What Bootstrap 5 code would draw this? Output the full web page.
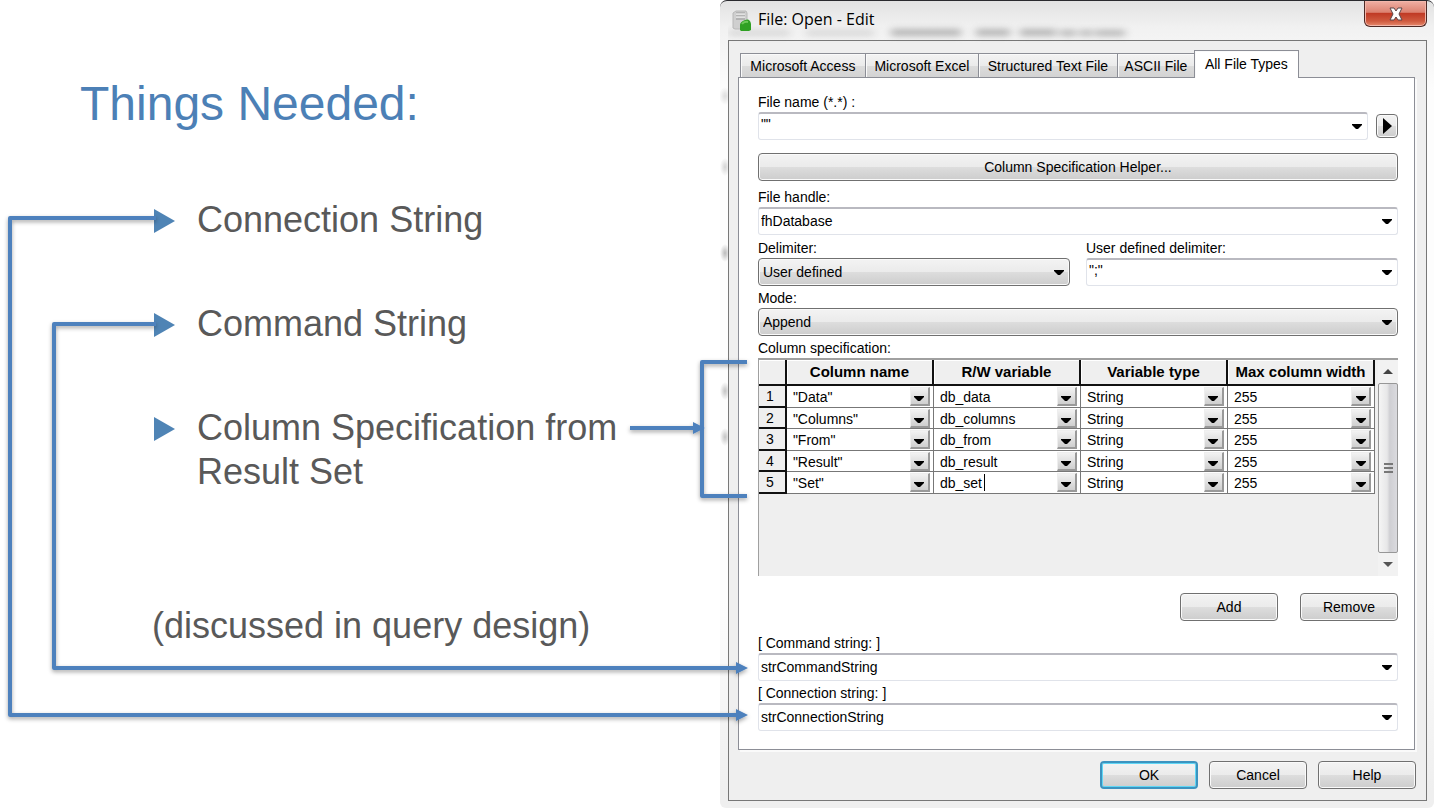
<!DOCTYPE html>
<html lang="en">
<head>
<meta charset="utf-8">
<meta name="viewport" content="width=device-width, initial-scale=1">
<title>Things Needed</title>
<link rel="stylesheet" href="https://cdn.jsdelivr.net/npm/bootstrap@5.3.0/dist/css/bootstrap.min.css">
<style>
  body { background: #fff; color: #000; font-family: "Liberation Sans", Arial, sans-serif; font-size: 14px; line-height: 20px; }
  .slide { min-height: 100vh; }
  .connectors { left: 0; top: 0; width: 100%; height: 808px; pointer-events: none; z-index: 2; }

  .notes { padding: 75px 0 0 80px; color: #595959; font-size: 36px; line-height: 44px; }
  .notes h1 { color: #4c80b6; font-size: 48px; line-height: 58px; margin: 0 0 65px; font-weight: 400; }
  .needs { margin: 0 0 110px 74px; display: grid; row-gap: 60px; }
  .needs li { display: flex; gap: 22px; }
  .needs svg { flex: none; margin-top: 11px; }
  .aside-note { margin: 0 0 0 72px; }

  .dialog-win { flex: 0 0 49.8%; padding: 0 7px 7px 8px; border-radius: 7px 7px 6px 6px;
    border-top: 1px solid #2a2a2e;
    background:
      radial-gradient(ellipse 6px 9px at 5px 95px, #ddd, transparent),
      radial-gradient(ellipse 5px 9px at 5px 166px, #d4d4d4, transparent),
      radial-gradient(ellipse 5px 9px at 5px 252px, #bbb, transparent),
      radial-gradient(ellipse 5px 9px at 5px 390px, #c4c4c4, transparent),
      radial-gradient(ellipse 5px 9px at 5px 436px, #c4c4c4, transparent),
      linear-gradient(#e2e2e2 0, #f1f1f1 26px, #f4f4f4 40px, #fdfdfd 90px, #fdfdfd 600px, #efefef 790px); }
  .titlebar { height: 39px; }
  .titlebar .ghost { left: 0; top: 20px; width: 410px; height: 22px; }
  .titlebar h2 { font: 16px/20px "Open Sans", "Noto Sans", sans-serif; margin: 8px 0 0 7px; }
  .titlebar .app-icon { margin: 9px 0 0 4px; flex: none; }
  .close-btn { width: 63px; height: 26px; padding: 0; border: 1px solid #4e2925; border-top: 0; border-radius: 0 0 6px 6px;
    background: linear-gradient(#efb0a4 0, #dc8271 45%, #c03a25 50%, #cf5a3f 80%, #e68a6d); box-shadow: inset 0 0 0 1px #f2b7ab; display: flex; align-items: center; justify-content: center; }

  .client { border: 1px solid #777; background: #efefef; padding: 9px 10px 11px 9px; }
  .file-tabs { display: grid; grid-template-columns: 126px 113px 139px 77px 104px; align-items: end; padding-left: 2px; position: relative; z-index: 1; margin-bottom: -1px; }
  .file-tabs button { height: 25px; padding: 0; border: 1px solid #8c8e96; border-left-width: 0; background: linear-gradient(#f3f3f3, #ebebeb 50%, #dcdcdc 51%, #d3d3d3); box-shadow: inset 1px 1px #fafafa; font-size: 14px; line-height: 20px; color: #000; white-space: nowrap; }
  .file-tabs button:first-child { border-left-width: 1px; }
  .file-tabs .current { height: 28px; background: #fff; border-left-width: 1px; border-bottom: 0; padding-bottom: 2px; margin-left: -1px; }
  .sheet { border: 1px solid #8c8e96; box-shadow: 2px 2px #fafafa; background: #fff; padding: 12px 16px 18px 19px; margin-right: 1px; }
  .sheet label, .cap { display: block; height: 22px; line-height: 24px; white-space: nowrap; }

  .combo { display: flex; height: 28px; border: 1px solid #e0e3ea; border-top: 2px solid #b9b9c0; border-radius: 3px; background: #fff; }
  .combo input { flex: 1; min-width: 0; border: 0; padding: 0 2px 2px; background: transparent; outline: 0; }
  .combo input, .push, .pick { font-size: 14px; line-height: 20px; color: #000; }
  .combo button, .cell button { border: 0; padding: 0; background: transparent; }
  .combo button { width: 20px; line-height: 0; }
  .combo.quoted input { padding-bottom: 6px; }
  .push, .pick { height: 28px; padding: 0; border: 1px solid #707070; border-radius: 4px; box-shadow: inset 0 0 0 1px #fafafa; background: linear-gradient(#f3f3f3, #ebebeb 50%, #dddddd 51%, #cdcdcd); }
  .push { width: 98px; }
  .push.wide { width: 100%; margin: 13px 0 4px; }
  .push.primary { border: 2px solid #3c93bf; box-shadow: inset 0 0 0 1px #5fd6f5; }
  .push.play { width: 22px; height: 24px; display: flex; align-items: center; justify-content: center; }
  .pick { width: 100%; appearance: none; padding: 0 4px; }
  .pick-wrap svg { position: absolute; right: 6px; top: 12px; pointer-events: none; }
  .delims { margin-top: 1px; }
  .edit-row { gap: 22px; margin: 17px 0 10px; }
  .end-row { gap: 11px; margin-top: 11px; }

  .grid-box { height: 218px; border-top: 2px solid #a0a0a0; border-left: 1px solid #a0a0a0; background: #efefef; }
  .spec { width: 100%; table-layout: fixed; border-collapse: separate; border-spacing: 0; font-size: 14px; }
  .spec th, .spec td { padding: 0; overflow: hidden; white-space: nowrap; }
  .spec thead th { height: 26px; font-size: 15px; line-height: 20px; text-align: center; font-weight: 700; background: #efefef; border-right: 2px solid #111; border-bottom: 2px solid #111; box-shadow: inset 1px 1px #fff; }
  .spec tbody tr { height: 22px; }
  .spec tbody tr:nth-child(even) { height: 21px; }
  .spec tbody th { font-weight: 400; text-align: center; padding-right: 4px; border-right: 2px solid #111; border-bottom: 2px solid #111; background: #efefef; line-height: 18px; }
  .spec td { border-right: 1px solid #777; border-bottom: 1px solid #777; background: #fff; }
  .spec .num { width: 28px; }
  .cell { display: flex; height: 20px; padding-right: 3px; }
  .cell input { flex: 1; min-width: 0; width: 0; height: 20px; border: 0; padding: 0 6px; outline: 0; line-height: 18px; color: #000; background: transparent; }
  .cell button { width: 20px; height: 19px; border: 1px solid #eee; border-right: 2px solid #999; border-bottom: 2px solid #999; background: linear-gradient(#f2f2f2, #cfcfcf); line-height: 0; padding-top: 6px; }
  .spec tr:nth-child(even) .cell { height: 19px; }
  .caret { width: 1px; height: 17px; left: 50px; top: 1px; background: #000; }

  .vscroll { width: 22px; margin-left: 3px; background: #f2f2f2; display: flex; flex-direction: column; align-items: center; }
  .vscroll button { height: 23px; width: 20px; border: 0; padding: 0; background: transparent; line-height: 0; }
  .vscroll .thumb { flex: 1; width: 20px; border: 1px solid #979797; border-radius: 2px; background: linear-gradient(90deg, #f5f5f5, #e7e7e8 45%, #cfcfd3 60%, #dadade); display: flex; align-items: center; justify-content: center; }
</style>
</head>
<body>
<svg width="0" height="0" class="position-absolute" aria-hidden="true">
  <symbol id="down" viewBox="0 0 10 5"><path d="M0 0h10v1L6 5H4L0 1z"/></symbol>
  <symbol id="bullet" viewBox="0 0 21 24"><path d="M0 0L21 12L0 24z" fill="#4f84b5"/></symbol>
</svg>

<main class="slide d-flex align-items-start position-relative">
  <section class="notes flex-fill">
    <h1>Things Needed:</h1>
    <ul class="needs list-unstyled">
      <li><svg width="21" height="24"><use href="#bullet"/></svg><span>Connection String</span></li>
      <li><svg width="21" height="24"><use href="#bullet"/></svg><span>Command String</span></li>
      <li><svg width="21" height="24"><use href="#bullet"/></svg><span>Column Specification from<br>Result Set</span></li>
    </ul>
    <p class="aside-note">(discussed in query design)</p>
  </section>

  <section class="dialog-win">
    <header class="titlebar d-flex position-relative">
      <svg class="ghost position-absolute" aria-hidden="true">
        <defs><filter id="haze" x="-10%" y="-100%" width="120%" height="300%"><feGaussianBlur stdDeviation="4 3"/></filter></defs>
        <g filter="url(#haze)" fill="#777" opacity=".5">
          <path opacity=".45" d="M0 9h62v6H0zM78 9h68v6H78z"/>
          <path d="M163 8h70v7h-70zM248 8h34v7h-34zM292 8h36v7h-36zM332 9h16v6h-16zM352 9h12v6h-12zM367 9h30v6h-30z"/>
        </g>
      </svg>
      <svg class="app-icon position-relative" width="19" height="22" viewBox="0 0 19 22" aria-hidden="true">
        <path d="M1 3l3-2h10l1 2v16H3l-2-1z" fill="#cfcfcf" stroke="#b8b8b8"/>
        <path d="M4 3h9M4 6h9M4 9h9" stroke="#969696"/>
        <path d="M4 4h9M4 7h9" stroke="#f4f4f4"/>
        <path d="M8 20v-5q0-3 5-5t6 4v6l-2 1H9z" fill="#2fa023"/>
        <path d="M10 14q2-3 6-2" stroke="#6cc957" stroke-width="2" fill="none"/>
      </svg>
      <h2 class="position-relative flex-fill">File: Open - Edit</h2>
      <button class="close-btn" type="button" aria-label="Close">
        <svg width="16" height="14" viewBox="0 0 16 14"><path d="M2 1h4l2 3 2-3h4l-3 6 3 6h-4L8 10l-2 3H2l3-6z" fill="#fff" stroke="#59474a"/></svg>
      </button>
    </header>

    <div class="client">
      <div class="file-tabs" role="tablist">
        <button type="button" role="tab">Microsoft Access</button>
        <button type="button" role="tab">Microsoft Excel</button>
        <button type="button" role="tab">Structured Text File</button>
        <button type="button" role="tab">ASCII File</button>
        <button type="button" role="tab" class="current" aria-selected="true">All File Types</button>
      </div>

      <form class="sheet">
        <label for="fname">File name (*.*) :</label>
        <div class="d-flex align-items-center">
          <div class="combo quoted flex-fill"><input id="fname" type="text" value='""'><button type="button" aria-label="Show file names"><svg width="10" height="5"><use href="#down"/></svg></button></div>
          <button class="push play ms-2" type="button" aria-label="Browse"><svg width="9" height="16"><path d="M0 0L9 8L0 16z"/></svg></button>
        </div>
        <button class="push wide d-block" type="button">Column Specification Helper...</button>

        <label for="fhandle">File handle:</label>
        <div class="combo"><input id="fhandle" type="text" value="fhDatabase"><button type="button" aria-label="Show handles"><svg width="10" height="5"><use href="#down"/></svg></button></div>

        <div class="row gx-3 delims">
          <div class="col">
            <label for="delim">Delimiter:</label>
            <div class="pick-wrap position-relative"><select id="delim" class="pick"><option>User defined</option></select><svg width="10" height="5"><use href="#down"/></svg></div>
          </div>
          <div class="col">
            <label for="udelim">User defined delimiter:</label>
            <div class="combo quoted"><input id="udelim" type="text" value='";"'><button type="button" aria-label="Show delimiters"><svg width="10" height="5"><use href="#down"/></svg></button></div>
          </div>
        </div>

        <label for="mode">Mode:</label>
        <div class="pick-wrap position-relative"><select id="mode" class="pick"><option>Append</option></select><svg width="10" height="5"><use href="#down"/></svg></div>

        <div class="cap" id="speccap">Column specification:</div>
        <div class="grid-box d-flex align-items-stretch">
          <div class="flex-fill">
            <table class="spec" aria-labelledby="speccap">
              <thead><tr><th class="num"></th><th>Column name</th><th>R/W variable</th><th>Variable type</th><th>Max column width</th></tr></thead>
              <tbody id="rows"></tbody>
            </table>
          </div>
          <div class="vscroll">
            <button type="button" aria-label="Scroll up"><svg width="10" height="5"><path d="M0 5L5 0L10 5z" fill="#444"/></svg></button>
            <div class="thumb"><svg width="9" height="11"><path d="M0 1h9M0 5h9M0 9h9" stroke="#777" stroke-width="2"/></svg></div>
            <button type="button" aria-label="Scroll down"><svg width="10" height="5"><path d="M0 0L5 5L10 0z" fill="#555"/></svg></button>
          </div>
        </div>

        <div class="d-flex justify-content-end edit-row">
          <button class="push" type="button">Add</button>
          <button class="push" type="button">Remove</button>
        </div>

        <label for="cmd">[ Command string: ]</label>
        <div class="combo"><input id="cmd" type="text" value="strCommandString"><button type="button" aria-label="Show command strings"><svg width="10" height="5"><use href="#down"/></svg></button></div>
        <label for="conn">[ Connection string: ]</label>
        <div class="combo"><input id="conn" type="text" value="strConnectionString"><button type="button" aria-label="Show connection strings"><svg width="10" height="5"><use href="#down"/></svg></button></div>
      </form>

      <footer class="d-flex justify-content-end end-row">
        <button class="push primary" type="button">OK</button>
        <button class="push" type="button">Cancel</button>
        <button class="push" type="button">Help</button>
      </footer>
    </div>
  </section>

  <!-- lines joining each bullet to its field in the dialog -->
  <svg class="connectors position-absolute" viewBox="0 0 1434 808" preserveAspectRatio="none" aria-hidden="true">
    <defs><filter id="sh" filterUnits="userSpaceOnUse" x="0" y="0" width="1434" height="808"><feDropShadow dx="0" dy="2" stdDeviation="2" flood-color="#000" flood-opacity=".35"/></filter></defs>
    <g filter="url(#sh)" fill="none" stroke="#4e81bd" stroke-width="4" stroke-linejoin="round">
      <path d="M156 218H10V715H737"/>
      <path d="M156 324H54V668H737"/>
      <path d="M747 362H702V496H747"/>
      <path d="M630 428H696"/>
      <path stroke="none" fill="#4e81bd" d="M736 709l12 6-12 6zM736 662l12 6-12 6zM693 422l12 6-12 6z"/>
    </g>
  </svg>
</main>

<script src="https://cdn.jsdelivr.net/npm/bootstrap@5.3.0/dist/js/bootstrap.bundle.min.js"></script>
<script>
  const data = [['"Data"', 'db_data'], ['"Columns"', 'db_columns'], ['"From"', 'db_from'], ['"Result"', 'db_result'], ['"Set"', 'db_set']];
  const heads = ['Column name', 'R/W variable', 'Variable type', 'Max column width'];
  const esc = s => s.replace(/"/g, '&quot;');
  document.getElementById('rows').innerHTML = data.map((r, i) =>
    `<tr><th scope="row">${i + 1}</th>` + [...r, 'String', '255'].map((v, c) =>
      `<td><div class="cell position-relative"><input type="text" aria-label="${heads[c]} ${i + 1}" value="${esc(v)}">` +
      (v === 'db_set' ? '<span class="caret position-absolute"></span>' : '') +
      `<button type="button" aria-label="Choose ${heads[c]} ${i + 1}"><svg width="10" height="5"><use href="#down"/></svg></button></div></td>`).join('') + '</tr>').join('');
</script>
</body>
</html>
